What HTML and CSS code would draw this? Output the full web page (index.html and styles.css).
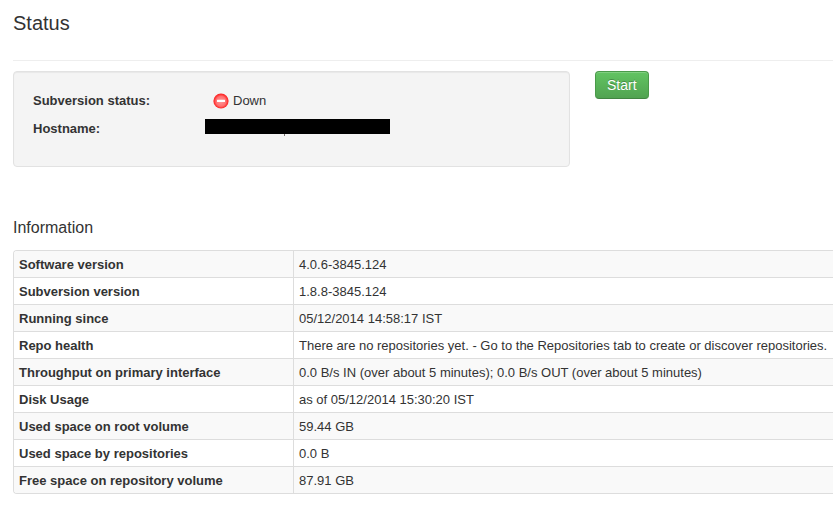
FILE: index.html
```html
<!DOCTYPE html>
<html lang="en">
<head>
<meta charset="utf-8">
<title>Status</title>
<link rel="stylesheet" href="styles.css">
</head>
<body>
<main class="page">
  <h1 class="title">Status</h1>
  <section class="overview">
    <dl class="well">
      <dt>Subversion status:</dt>
      <dd class="state">
        <svg class="state-icon" viewBox="0 0 16 16" aria-hidden="true">
          <defs>
            <radialGradient id="down" cx="50%" cy="52%" r="50%">
              <stop offset="0" stop-color="#ff9a9a"/>
              <stop offset="0.65" stop-color="#ff7070"/>
              <stop offset="0.85" stop-color="#ff3a3a"/>
              <stop offset="1" stop-color="#fa2222"/>
            </radialGradient>
          </defs>
          <circle cx="8" cy="8" r="7.6" fill="url(#down)"/>
          <rect x="4" y="6.8" width="8" height="2.2" rx="0.3" fill="#fff"/>
        </svg>
        <span>Down</span>
      </dd>
      <dt>Hostname:</dt>
      <dd><span class="redacted"></span></dd>
    </dl>
    <button class="btn" type="button">Start</button>
  </section>
  <h2 class="subtitle">Information</h2>
  <table class="info">
    <tbody>
      <tr><th scope="row">Software version</th><td>4.0.6-3845.124</td></tr>
      <tr><th scope="row">Subversion version</th><td>1.8.8-3845.124</td></tr>
      <tr><th scope="row">Running since</th><td>05/12/2014 14:58:17 IST</td></tr>
      <tr><th scope="row">Repo health</th><td>There are no repositories yet. - Go to the Repositories tab to create or discover repositories.</td></tr>
      <tr><th scope="row">Throughput on primary interface</th><td>0.0 B/s IN (over about 5 minutes); 0.0 B/s OUT (over about 5 minutes)</td></tr>
      <tr><th scope="row">Disk Usage</th><td>as of 05/12/2014 15:30:20 IST</td></tr>
      <tr><th scope="row">Used space on root volume</th><td>59.44 GB</td></tr>
      <tr><th scope="row">Used space by repositories</th><td>0.0 B</td></tr>
      <tr><th scope="row">Free space on repository volume</th><td>87.91 GB</td></tr>
    </tbody>
  </table>
</main>
</body>
</html>
```
FILE: styles.css
```css
* {
  box-sizing: border-box;
}

body {
  margin: 0;
  background: #fff;
  color: #333;
  font: 13px/18px Arial, "Liberation Sans", sans-serif;
}

.page {
  padding: 5px 0 20px 13px;
}

.title {
  margin: 0 0 10px;
  padding-bottom: 19px;
  border-bottom: 1px solid #eee;
  font-size: 20px;
  font-weight: normal;
  line-height: 36px;
}

.overview {
  display: flex;
  align-items: flex-start;
  gap: 25px;
}

.well {
  display: grid;
  grid-template-columns: 172px 1fr;
  row-gap: 10px;
  flex: 0 1 557px;
  min-height: 96px;
  margin: 0;
  padding: 20px 20px 28px 19px;
  align-content: start;
  background: #f4f4f4;
  border: 1px solid #e2e2e2;
  border-radius: 4px;
  box-shadow: inset 0 1px 1px rgba(0, 0, 0, 0.05);
}

.well dt {
  font-weight: bold;
}

.well dd {
  display: flex;
  margin: 0;
}

.well .state {
  align-items: center;
  gap: 4px;
  padding-left: 8px;
}

.state-icon {
  width: 16px;
  height: 16px;
}

.redacted {
  position: relative;
  width: 185px;
  height: 15px;
  margin-top: -1px;
  background: #000;
}

.redacted::after {
  content: "";
  position: absolute;
  top: 100%;
  left: 79px;
  width: 1px;
  height: 2px;
  background: #77706e;
}

.btn {
  height: 28px;
  padding: 0 11px;
  color: #fff;
  font: inherit;
  font-size: 14px;
  text-shadow: 0 -1px 0 rgba(0, 0, 0, 0.25);
  background: linear-gradient(#62c462, #51a351);
  border: 1px solid #4a9a4a;
  border-bottom-color: #418541;
  border-radius: 4px;
  box-shadow: inset 0 1px 0 rgba(255, 255, 255, 0.2);
  cursor: pointer;
}

.subtitle {
  margin: 43px 0 4px;
  font-size: 16px;
  font-weight: normal;
  line-height: 36px;
}

.info {
  width: 100%;
  border: 1px solid #ddd;
  border-right: 0;
  border-radius: 4px 0 0 4px;
  border-collapse: separate;
  border-spacing: 0;
  overflow: hidden;
}

.info th,
.info td {
  padding: 5px 5px 3px;
  text-align: left;
  vertical-align: top;
}

.info th {
  width: 279px;
}

.info td {
  border-left: 1px solid #ddd;
}

.info tr + tr > * {
  border-top: 1px solid #ddd;
}

.info tr:nth-child(odd) > * {
  background: #f9f9f9;
}
```
